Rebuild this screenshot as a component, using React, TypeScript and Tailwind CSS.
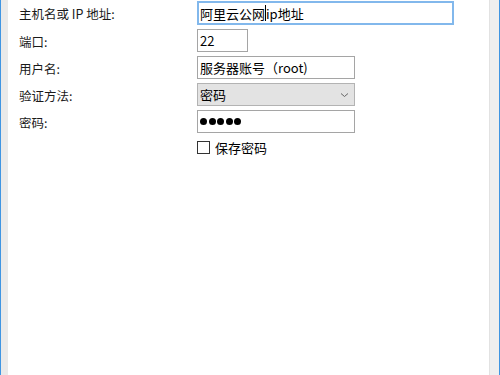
import React from "react";

const font = { fontFamily: '"Noto Sans CJK SC", "Noto Sans", sans-serif' };

function Label({ children }: { children: React.ReactNode }) {
  return (
    <div className="h-[23px] flex items-center pt-[3px] text-[12.5px] text-[#1a1a1a] leading-none">
      {children}
    </div>
  );
}

export default function App() {
  return (
    <div
      className="w-[500px] h-[375px] flex bg-white overflow-hidden"
      style={font}
    >
      <div className="w-[1px] h-full bg-[#3f95e2]" />
      <div className="w-[7px] h-full bg-[#e9e9e9]" />
      <div className="flex-1 h-full bg-white pl-[11px] pt-[1px]">
        <div className="grid grid-cols-[178px_1fr] gap-y-[4px]">
          <Label>主机名或 IP 地址:</Label>
          <div className="w-[257px] h-[24px] border-2 border-[#82b8ec] flex items-center pl-[1px] text-[13px] text-black leading-none">
            <span>阿里云公网</span>
            <span className="w-[1px] h-[16px] bg-black" />
            <span>ip地址</span>
          </div>

          <Label>端口:</Label>
          <div className="w-[51px] h-[23px] border border-[#a5a5a5] flex items-center pl-[2px] text-[13px] text-black leading-none">
            22
          </div>

          <Label>用户名:</Label>
          <div className="w-[158px] h-[23px] border border-[#a5a5a5] flex items-center pl-[2px] text-[13px] text-black leading-none">
            服务器账号（root)
          </div>

          <Label>验证方法:</Label>
          <div className="w-[158px] h-[23px] border border-[#b3b3b3] bg-[#e3e3e3] flex items-center justify-between pl-[2px] pr-[5px] text-[13px] text-black leading-none">
            <span>密码</span>
            <svg width="9" height="6" viewBox="0 0 9 6" fill="none">
              <path d="M1 1.5 L4.5 4.5 L8 1.5" stroke="#666" strokeWidth="1" />
            </svg>
          </div>

          <Label>密码:</Label>
          <div className="w-[158px] h-[23px] border border-[#a5a5a5] flex items-center gap-[1.5px] pl-[2px]">
            <span className="w-[7px] h-[7px] rounded-full bg-black" />
            <span className="w-[7px] h-[7px] rounded-full bg-black" />
            <span className="w-[7px] h-[7px] rounded-full bg-black" />
            <span className="w-[7px] h-[7px] rounded-full bg-black" />
            <span className="w-[7px] h-[7px] rounded-full bg-black" />
          </div>

          <div />
          <div className="flex items-center gap-[5px] mt-[4px]">
            <span className="w-[13px] h-[13px] border border-[#333]" />
            <span className="text-[13px] text-black leading-none">保存密码</span>
          </div>
        </div>
      </div>
      <div className="w-[1px] h-full bg-[#e2e2e2]" />
      <div className="w-[9px] h-full bg-[#efefef]" />
      <div className="w-[1px] h-full bg-[#3f95e2]" />
    </div>
  );
}
